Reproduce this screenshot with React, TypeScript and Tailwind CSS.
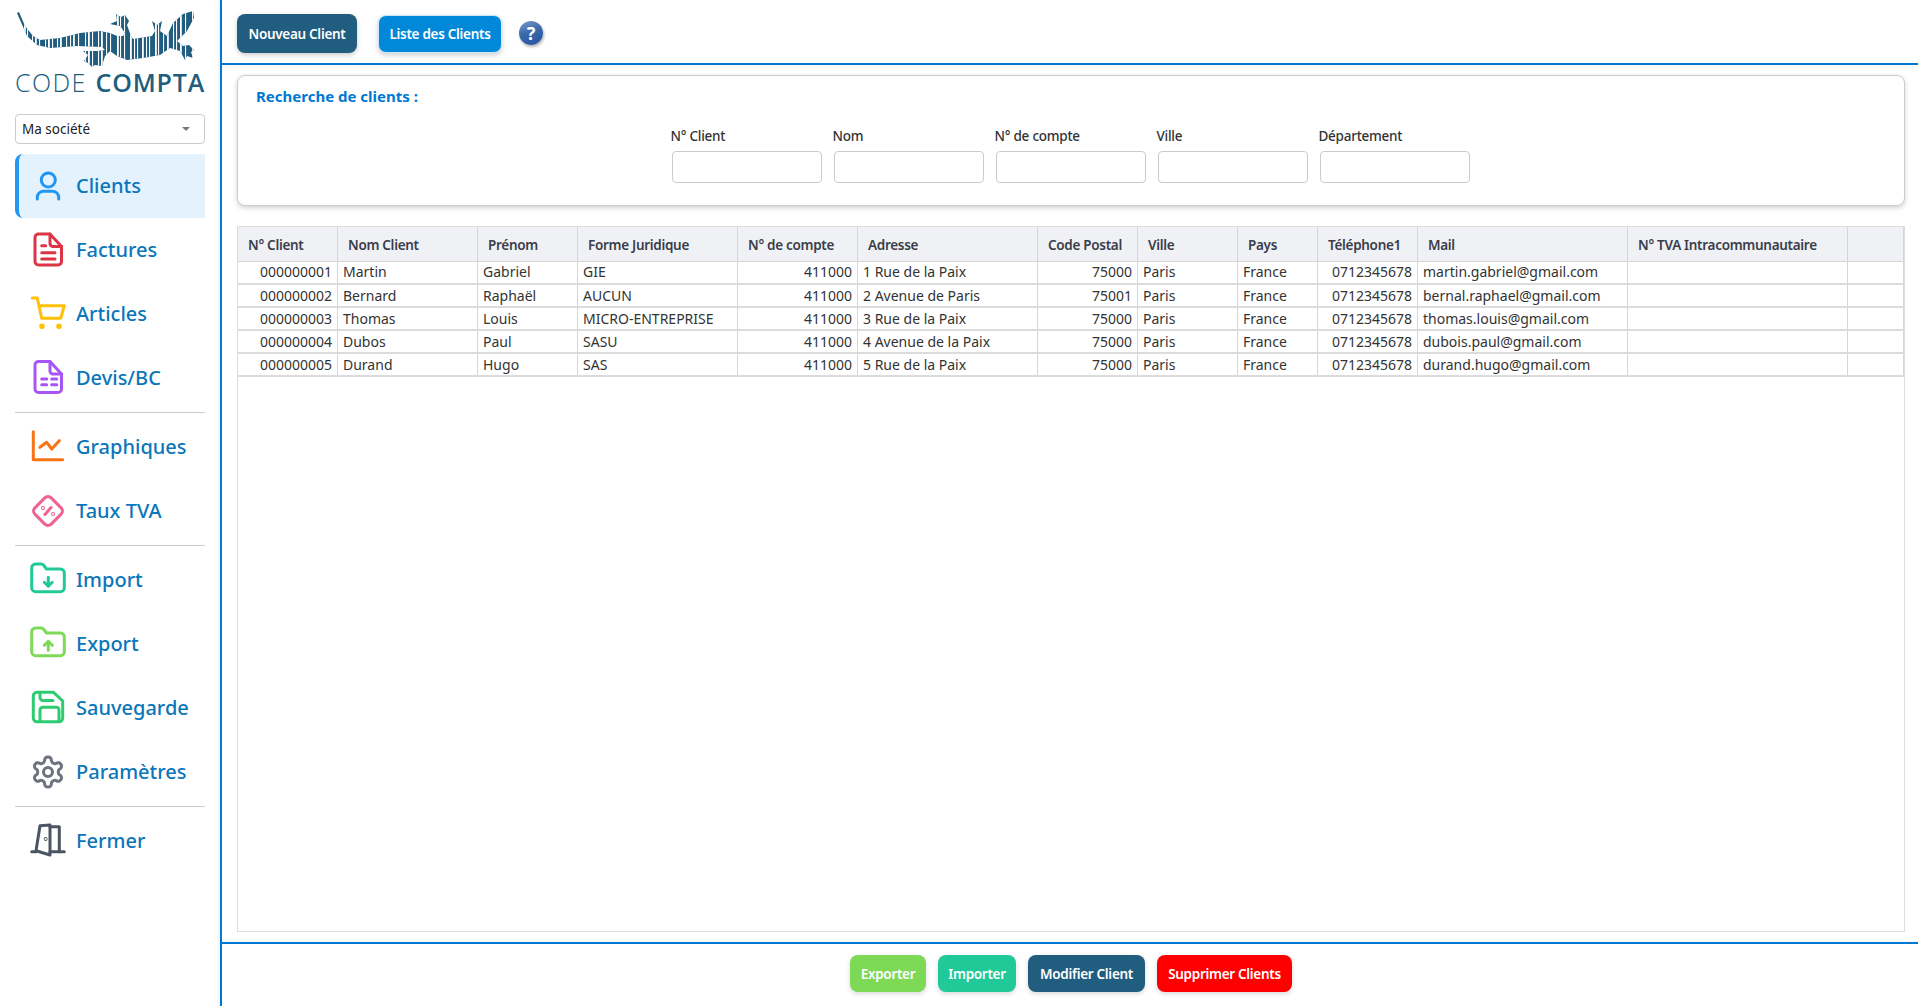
import React from "react";

const F = "font-['Noto_Sans','Open_Sans',sans-serif]";

function Gecko() {
  const gaps = [4,3,5,3,4,6,3,4,5,3,6,4,3,5,7,3,4,6,3,5,4,7,3,4,6,4,3,5,4,3,6,3,5,4,6,3,4,5,7,3,4,5,3,6];
  const xs: number[] = [];
  let x = 10;
  gaps.forEach((g) => { x += g; xs.push(x); });
  return (
    <svg viewBox="0 0 200 64" className="w-[200px] h-[64px] block -ml-[5px]" aria-hidden="true">
      <defs>
        <clipPath id="gk">
          <path d="M7 5 L9 4 L15 18 L23 28 L30 32 L50 30 L70 25 L90 23 L100 25 L107 28 L113 28 L115 25 L110 18 L100 16 L107 13 L106 6 L111 9 L115 7 L119 13 L117 17 L121 28 L123 31 L142 28 L145 23 L142 13 L147 17 L152 13 L150 23 L157 28 L163 15 L173 6 L183 3 L184 10 L177 23 L167 33 L173 38 L179 37 L184 42 L181 44 L183 50 L177 48 L175 52 L170 43 L160 40 L150 47 L133 50 L117 52 L107 48 L100 43 L95 48 L92 58 L85 57 L82 59 L78 55 L74 53 L78 47 L73 43 L87 43 L95 42 L92 39 L67 38 L40 40 L27 37 L17 28 Z" />
        </clipPath>
      </defs>
      <g clipPath="url(#gk)">
        <rect x="0" y="0" width="200" height="64" fill="#205d7f" />
        {xs.map((v, i) => (
          <rect key={i} x={v} y="0" width={i % 3 === 0 ? 1.8 : 1.1} height="64" fill="#ffffff" />
        ))}
      </g>
    </svg>
  );
}

const Svg = ({ children, color }: { children: React.ReactNode; color: string }) => (
  <svg viewBox="0 0 36 36" width="36" height="36" fill="none" stroke={color} strokeWidth="3" strokeLinecap="round" strokeLinejoin="round" aria-hidden="true">
    {children}
  </svg>
);

const UserI = () => (
  <Svg color="#2196f3"><circle cx="18.300" cy="12" r="7" /><path d="M7.300 31v-1.500a6.300 6.300 0 0 1 6.300-6.300h8.800a6.300 6.300 0 0 1 6.300 6.300V31" /></Svg>
);
const InvoiceI = () => (
  <Svg color="#dc3545"><path d="M20 2H8.500A3.500 3.500 0 0 0 5 5.500V29.500A3.500 3.500 0 0 0 8.500 33H28A3.500 3.500 0 0 0 31.500 29.500V14.500Z" /><path d="M20 2v9.500a3 3 0 0 0 3 3h8.500" /><path d="M11.700 13.700h4M11.700 20.700h13.300M11.700 27h13.300" /></Svg>
);
const CartI = () => (
  <Svg color="#ffc107"><path d="M2.300 2h5l4.400 20.300h19l3.600-12.600H9.300" /><circle cx="12" cy="30.300" r="1.300" fill="#ffc107" /><circle cx="29" cy="30.300" r="1.300" fill="#ffc107" /></Svg>
);
const DevisI = () => (
  <Svg color="#a855f7"><path d="M20 1.500H8.500A3.500 3.500 0 0 0 5 5V29A3.500 3.500 0 0 0 8.500 32.500H28A3.500 3.500 0 0 0 31.500 29V14Z" /><path d="M20 1.500V11a3 3 0 0 0 3 3h8.500" /><path d="M11.700 19h5M21.700 19h5M11.700 24.700h5M21.700 24.700h5" /></Svg>
);
const ChartI = () => (
  <Svg color="#f97316"><path d="M3.300 2.700V30.700H32.700" /><path d="M10 18.300l6.700-5 5 6.700 7.600-8.300" /></Svg>
);
const TaxI = () => (
  <Svg color="#f06292"><rect x="6.500" y="6.500" width="23" height="23" rx="4.500" transform="rotate(45 18 18)" /><path d="M15 21.500l6-7" /><circle cx="13" cy="15" r="0.500" /><circle cx="23" cy="21" r="0.500" /></Svg>
);
const Folder = ({ color, up }: { color: string; up?: boolean }) => (
  <Svg color={color}>
    <path d="M1.700 6a4 4 0 0 1 4-4h5.500a3 3 0 0 1 2.300 1l3 4h13.800a4 4 0 0 1 4 4v14.700a4 4 0 0 1-4 4H5.700a4 4 0 0 1-4-4Z" />
    {up ? <path d="M18.300 24.300v-9M14.300 19.300l4-4 4 4" /> : <path d="M18.300 15.300v9M14.300 20.300l4 4 4-4" />}
  </Svg>
);
const SaveI = () => (
  <Svg color="#2ecc71"><path d="M7 2.300H23.500L32.700 11V28A3.700 3.700 0 0 1 29 31.700H7A3.700 3.700 0 0 1 3.300 28V6A3.700 3.700 0 0 1 7 2.300Z" /><path d="M10 2.500v5a3 3 0 0 0 3 3h10" /><path d="M10 31V20a2.700 2.700 0 0 1 2.700-2.700h13.600A2.700 2.700 0 0 1 29 20v11" /></Svg>
);
const GearI = () => (
  <Svg color="#6b7280">
    <g transform="scale(1.5)" strokeWidth="2">
      <path d="M12.220 2h-.44a2 2 0 0 0-2 2v.18a2 2 0 0 1-1 1.730l-.43.250a2 2 0 0 1-2 0l-.15-.08a2 2 0 0 0-2.730.730l-.22.380a2 2 0 0 0 .730 2.730l.15.100a2 2 0 0 1 1 1.720v.510a2 2 0 0 1-1 1.740l-.15.090a2 2 0 0 0-.730 2.730l.22.380a2 2 0 0 0 2.730.730l.15-.08a2 2 0 0 1 2 0l.43.250a2 2 0 0 1 1 1.730V20a2 2 0 0 0 2 2h.44a2 2 0 0 0 2-2v-.18a2 2 0 0 1 1-1.730l.43-.25a2 2 0 0 1 2 0l.15.08a2 2 0 0 0 2.730-.73l.22-.39a2 2 0 0 0-.73-2.730l-.15-.08a2 2 0 0 1-1-1.740v-.5a2 2 0 0 1 1-1.740l.15-.09a2 2 0 0 0 .73-2.730l-.22-.38a2 2 0 0 0-2.730-.73l-.15.08a2 2 0 0 1-2 0l-.43-.25a2 2 0 0 1-1-1.730V4a2 2 0 0 0-2-2z" />
      <circle cx="12" cy="12" r="3" />
    </g>
  </Svg>
);
const DoorI = () => (
  <Svg color="#4b5563"><path d="M1.700 28.700H6M20 28.700h14.300" /><path d="M10 2.700L20 2V32L6 27.700Z" /><path d="M20 3.700h9.300V28.700" /><circle cx="15.700" cy="16" r="0.400" /></Svg>
);

const Item = ({ icon, label, active }: { icon: React.ReactNode; label: string; active?: boolean }) => (
  <div className={active
    ? "flex items-center h-[64px] rounded-l-lg border-l-4 border-[#2196f3] bg-[#e3f2fd] pl-[11px] gap-[10px]"
    : "flex items-center h-[64px] pl-[15px] gap-[10px]"}>
    <span className="w-[36px] h-[36px] shrink-0 block">{icon}</span>
    <span className="text-[20px] font-medium text-[#0b76b9]">{label}</span>
  </div>
);

const Sep = () => <div className="h-[1px] bg-[#cccccc] mt-[2px] mb-[2px]" />;

const cols = [
  { k: "N° Client", w: "w-[100px]", r: true },
  { k: "Nom Client", w: "w-[140px]" },
  { k: "Prénom", w: "w-[100px]" },
  { k: "Forme Juridique", w: "w-[160px]" },
  { k: "N° de compte", w: "w-[120px]", r: true },
  { k: "Adresse", w: "w-[180px]" },
  { k: "Code Postal", w: "w-[100px]", r: true },
  { k: "Ville", w: "w-[100px]" },
  { k: "Pays", w: "w-[80px]" },
  { k: "Téléphone1", w: "w-[100px]", r: true },
  { k: "Mail", w: "w-[210px]" },
  { k: "N° TVA Intracommunautaire", w: "w-[220px]" },
  { k: "", w: "w-[56px]" },
];

const rows = [
  ["000000001", "Martin", "Gabriel", "GIE", "411000", "1 Rue de la Paix", "75000", "Paris", "France", "0712345678", "martin.gabriel@gmail.com", "", ""],
  ["000000002", "Bernard", "Raphaël", "AUCUN", "411000", "2 Avenue de Paris", "75001", "Paris", "France", "0712345678", "bernal.raphael@gmail.com", "", ""],
  ["000000003", "Thomas", "Louis", "MICRO-ENTREPRISE", "411000", "3 Rue de la Paix", "75000", "Paris", "France", "0712345678", "thomas.louis@gmail.com", "", ""],
  ["000000004", "Dubos", "Paul", "SASU", "411000", "4 Avenue de la Paix", "75000", "Paris", "France", "0712345678", "dubois.paul@gmail.com", "", ""],
  ["000000005", "Durand", "Hugo", "SAS", "411000", "5 Rue de la Paix", "75000", "Paris", "France", "0712345678", "durand.hugo@gmail.com", "", ""],
];

const fields = ["N° Client", "Nom", "N° de compte", "Ville", "Département"];

const btn = "pt-[2px] rounded-lg text-white text-[13.5px] font-semibold tracking-[-0.3px]";

export default function App() {
  return (
    <div className={`${F} flex h-screen w-full overflow-hidden bg-white text-[#222]`}>
      <aside className="w-[222px] shrink-0 border-r-2 border-[#0078d4] px-[15px] pt-[8px] bg-white shadow-[inset_-4px_0_4px_-3px_rgba(0,0,0,0.08)]">
        <Gecko />
        <div className="flex justify-between h-[20px] items-center text-[#205d7f] text-[25px] leading-none font-['Open_Sans',sans-serif] whitespace-nowrap">
          <span className="font-light tracking-[1.4px]">CODE</span>
          <span className="font-semibold tracking-[0.8px]">COMPTA</span>
        </div>
        <div className="mt-[22px] h-[30px] border border-[#cccccc] rounded flex items-center justify-between pl-[6px] pr-[14px] text-[13.5px] text-[#222]">
          <span>Ma société</span>
          <span className="w-0 h-0 border-x-[4px] border-x-transparent border-t-[4px] border-t-[#777]" />
        </div>
        <nav className="mt-[10px]">
          <Item active icon={<UserI />} label="Clients" />
          <Item icon={<InvoiceI />} label="Factures" />
          <Item icon={<CartI />} label="Articles" />
          <Item icon={<DevisI />} label="Devis/BC" />
          <Sep />
          <Item icon={<ChartI />} label="Graphiques" />
          <Item icon={<TaxI />} label="Taux TVA" />
          <Sep />
          <Item icon={<Folder color="#20c997" />} label="Import" />
          <Item icon={<Folder color="#7ed957" up />} label="Export" />
          <Item icon={<SaveI />} label="Sauvegarde" />
          <Item icon={<GearI />} label="Paramètres" />
          <Sep />
          <Item icon={<DoorI />} label="Fermer" />
        </nav>
      </aside>

      <main className="flex-1 min-w-0 flex flex-col">
        <header className="h-[65px] shrink-0 border-b-2 border-[#0078d4] flex items-center pl-[15px] pt-[4px] shadow-[0_3px_5px_rgba(0,0,0,0.04)]">
          <button className={`${btn} h-[39px] w-[120px] bg-[#205d7f] shadow-[0_2px_5px_rgba(0,0,0,0.2)]`}>Nouveau Client</button>
          <button className={`${btn} ml-[21px] h-[38px] w-[124px] bg-[#0288d9] border border-[#cfe8f7] shadow-[0_2px_5px_rgba(0,0,0,0.2)]`}>Liste des Clients</button>
          <span className="ml-[17px] -mt-[2px] w-[24px] h-[24px] rounded-full bg-[linear-gradient(160deg,#7e9cc6_0%,#3a69ab_45%,#24529f_100%)] flex items-center justify-center text-white text-[18px] font-bold leading-none shadow-[1px_2px_3px_rgba(0,0,0,0.3)]">?</span>
        </header>

        <div className="flex-1 min-h-0 flex flex-col pl-[15px] pr-[13px] pt-[10px]">
          <section className="h-[131px] shrink-0 rounded-lg border border-[#cccccc] bg-white shadow-[0_2px_5px_rgba(0,0,0,0.18)] pt-[10px] pl-[18px]">
            <h2 className="text-[15px] leading-[20px] font-bold text-[#0078d4]">Recherche de clients :</h2>
            <div className="flex justify-center gap-[12px] mt-[20px] pr-[19px]">
              {fields.map((f) => (
                <label key={f} className="w-[150px] block">
                  <span className="block text-[13.5px] leading-[20px] font-medium text-[#333] -ml-[1px] tracking-[-0.25px]">{f}</span>
                  <input className="block mt-[5px] h-[32px] w-[150px] rounded border border-[#cccccc] bg-white" />
                </label>
              ))}
            </div>
          </section>

          <div className="flex-1 min-h-0 mt-[20px] mb-[10px] border border-[#dddddd] overflow-hidden">
            <table className="table-fixed border-collapse w-[1666px] -ml-[1px] text-[14px]">
              <colgroup>
                {cols.map((c, i) => <col key={i} className={c.w} />)}
              </colgroup>
              <thead>
                <tr className="h-[34px] bg-[#f0f1f5]">
                  {cols.map((c, i) => (
                    <th key={i} className="border border-[#d6d6d6] border-t-0 pl-[10px] pt-[2px] text-left text-[13.5px] font-semibold text-[#3a3d4a] tracking-[-0.3px] whitespace-nowrap">{c.k}</th>
                  ))}
                </tr>
              </thead>
              <tbody>
                {rows.map((r, i) => (
                  <tr key={i} className="h-[23px]">
                    {r.map((v, j) => (
                      <td key={j} className={`border-x border-[#d6d6d6] border-b-2 border-b-[#dcdcdc] px-[5px] p-0 leading-[20px] text-[#333] whitespace-nowrap ${cols[j].r ? "text-right" : "text-left"}`}>{v}</td>
                    ))}
                  </tr>
                ))}
              </tbody>
            </table>
          </div>
        </div>

        <footer className="h-[64px] shrink-0 border-t-2 border-[#0078d4] flex items-start justify-center gap-[12px] pt-[11px] pl-[2px] shadow-[0_-1px_4px_rgba(0,0,0,0.03)]">
          <button className={`${btn} h-[37px] w-[76px] bg-[#7ed957] shadow-[0_2px_5px_rgba(0,0,0,0.15)]`}>Exporter</button>
          <button className={`${btn} h-[37px] w-[78px] bg-[#20c997] shadow-[0_2px_5px_rgba(0,0,0,0.15)]`}>Importer</button>
          <button className={`${btn} h-[37px] w-[117px] bg-[#205d7f] shadow-[0_2px_5px_rgba(0,0,0,0.15)]`}>Modifier Client</button>
          <button className={`${btn} h-[37px] w-[135px] bg-[#ff0000] shadow-[0_2px_5px_rgba(0,0,0,0.15)]`}>Supprimer Clients</button>
        </footer>
      </main>
    </div>
  );
}
